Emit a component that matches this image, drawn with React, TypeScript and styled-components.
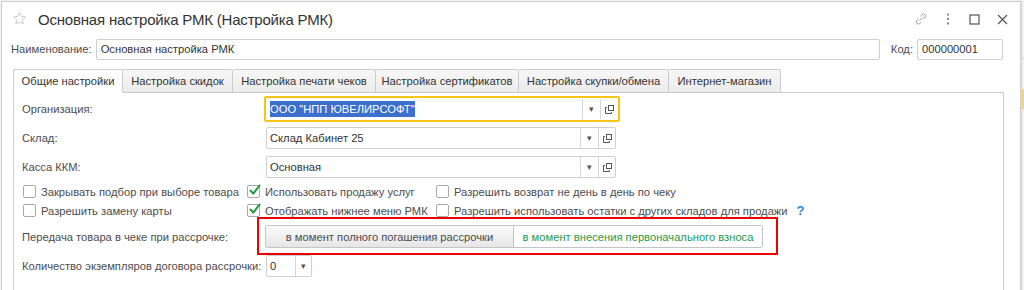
import React from "react";
import styled, { createGlobalStyle } from "styled-components";

/* -----------------------------------------------
 * Форма «Основная настройка РМК»
 * ----------------------------------------------- */

const GlobalStyle = createGlobalStyle`
  html, body {
    margin: 0;
    padding: 0;
    background: #f2f2f2;
    font-family: "Liberation Sans", Arial, sans-serif;
  }
  #root {
    height: 290px;
    overflow: hidden;
  }
`;

const tabs = [
  { label: "Общие настройки", width: 110 },
  { label: "Настройка скидок", width: 110 },
  { label: "Настройка печати чеков", width: 143 },
  { label: "Настройка сертификатов", width: 143 },
  { label: "Настройка скупки/обмена", width: 150 },
  { label: "Интернет-магазин", width: 112 },
];

const checks = [
  { label: "Закрывать подбор при выборе товара", checked: false },
  { label: "Использовать продажу услуг", checked: true },
  { label: "Разрешить возврат не день в день по чеку", checked: false },
  { label: "Разрешить замену карты", checked: false },
  { label: "Отображать нижнее меню РМК", checked: true },
  { label: "Разрешить использовать остатки с других складов для продажи", checked: false, hint: true },
];

const Star = () => (
  <svg width="15" height="15" viewBox="0 0 24 24" fill="none" stroke="#c4c4c4" strokeWidth="1.4" strokeLinejoin="round">
    <path d="M12 2.5l2.9 6.1 6.6.8-4.9 4.6 1.3 6.6L12 17.3l-5.9 3.3 1.3-6.6-4.9-4.6 6.6-.8z" />
  </svg>
);

const LinkIcon = () => (
  <svg width="14" height="14" viewBox="0 0 16 16" fill="none" stroke="#9a9a9a" strokeWidth="1.1" strokeLinecap="round">
    <path d="M6.8 9.2l2.6-2.6" />
    <path d="M7.6 4.6l1.6-1.6a2.4 2.4 0 0 1 3.4 3.4L11 8" />
    <path d="M8.4 11.4l-1.6 1.6a2.4 2.4 0 0 1-3.4-3.4L5 8" />
  </svg>
);

const DotsIcon = () => (
  <svg width="4" height="12" viewBox="0 0 4 12" fill="#8a8a8a">
    <rect x="1" y="0.5" width="2" height="2" />
    <rect x="1" y="5" width="2" height="2" />
    <rect x="1" y="9.5" width="2" height="2" />
  </svg>
);

const SquareIcon = () => (
  <svg width="11" height="11" viewBox="0 0 11 11" fill="none" stroke="#555" strokeWidth="1.2">
    <rect x="1" y="1" width="9" height="9" />
  </svg>
);

const CloseIcon = () => (
  <svg width="11" height="11" viewBox="0 0 11 11" fill="none" stroke="#555" strokeWidth="1.2">
    <path d="M1 1l9 9M10 1l-9 9" />
  </svg>
);

const OpenIcon = () => (
  <svg width="9" height="9" viewBox="0 0 9 9" fill="none" stroke="#555" strokeWidth="1">
    <rect x="3.5" y="0.5" width="5" height="5" />
    <path d="M2 2.5H0.5v6h6V7" />
  </svg>
);

const CheckMark = () => (
  <svg width="13" height="13" viewBox="0 0 13 13" fill="none" stroke="#1f9a3b" strokeWidth="2" strokeLinecap="round" strokeLinejoin="round">
    <path d="M2.5 6.5l2.8 3.2L11.5 1.5" />
  </svg>
);

const ComboBox: React.FC<{ value: string; focused?: boolean; selected?: boolean }> = ({ value, focused, selected }) => (
  <Combo $focused={focused}>
    <ComboText>{selected ? <Selection>{value}</Selection> : value}</ComboText>
    <DropButton>▾</DropButton>
    <OpenButton>
      <OpenIcon />
    </OpenButton>
  </Combo>
);

const App: React.FC = () => {
  return (
    <>
      <GlobalStyle />
      <Desk>
        <Window>
          <TitleBar>
            <Star />
            <Title>Основная настройка РМК (Настройка РМК)</Title>
            <TitleTools>
              <LinkIcon />
              <DotsIcon />
              <SquareIcon />
              <CloseIcon />
            </TitleTools>
          </TitleBar>

          {/* Наименование / Код */}
          <NameRow>
            <Label>Наименование:</Label>
            <TextBox $grow>Основная настройка РМК</TextBox>
            <Label>Код:</Label>
            <TextBox $width={86}>000000001</TextBox>
          </NameRow>

          {/* Вкладки */}
          <TabBar>
            {tabs.map((t, i) => (
              <Tab key={t.label} $active={i === 0} $width={t.width}>
                {t.label}
              </Tab>
            ))}
          </TabBar>

          <Panel>
            <FieldRow>
              <FieldLabel>Организация:</FieldLabel>
              <ComboBox value={'ООО "НПП ЮВЕЛИРСОФТ"'} focused selected />
            </FieldRow>
            <FieldRow>
              <FieldLabel>Склад:</FieldLabel>
              <ComboBox value="Склад Кабинет 25" />
            </FieldRow>
            <FieldRow>
              <FieldLabel>Касса ККМ:</FieldLabel>
              <ComboBox value="Основная" />
            </FieldRow>

            <CheckGrid>
              {checks.map((c) => (
                <CheckItem key={c.label}>
                  <Box>{c.checked && <CheckMark />}</Box>
                  <span>{c.label}</span>
                  {c.hint && <Hint>?</Hint>}
                </CheckItem>
              ))}
            </CheckGrid>

            <FieldRow $top={8}>
              <FieldLabel>Передача товара в чеке при рассрочке:</FieldLabel>
              <Highlight>
                <Switcher>
                  <SwitchButton>в момент полного погашения рассрочки</SwitchButton>
                  <SwitchButton $active>в момент внесения первоначального взноса</SwitchButton>
                </Switcher>
              </Highlight>
            </FieldRow>

            <FieldRow>
              <FieldLabel>Количество экземпляров договора рассрочки:</FieldLabel>
              <SmallCombo>
                <ComboText>0</ComboText>
                <DropButton>▾</DropButton>
              </SmallCombo>
            </FieldRow>
          </Panel>
        </Window>

        <SideStrip>
          <SideBand />
        </SideStrip>
      </Desk>
    </>
  );
};

const Desk = styled.div`
  display: flex;
  height: 290px;
  padding: 1px 0 0 1px;
  box-sizing: border-box;
`;

const Window = styled.div`
  width: 1020px;
  flex: none;
  background: #fff;
  border: 1px solid #cdcdcd;
  border-bottom: none;
  box-sizing: border-box;
  color: #4a4a4a;
  font-size: 11.2px;
`;

const TitleBar = styled.div`
  display: flex;
  align-items: center;
  height: 34px;
  padding: 0 12px 0 10px;
  svg:first-child {
    margin-top: -1px;
  }
`;

const Title = styled.div`
  margin-left: 11px;
  font-size: 15px;
  letter-spacing: -0.2px;
  color: #333;
`;

const TitleTools = styled.div`
  margin-left: auto;
  display: flex;
  align-items: center;
  gap: 17px;
  svg:first-child {
    margin-right: 1px;
  }
  svg:nth-child(2) {
    margin-right: 2px;
  }
`;

const NameRow = styled.div`
  display: flex;
  align-items: center;
  gap: 4px;
  height: 24px;
  padding: 0 17px 0 9px;
  margin-top: 1px;
  > span:nth-of-type(2) {
    margin-left: 7px;
  }
`;

const Label = styled.span`
  color: #4d4d4d;
  white-space: nowrap;
`;

const TextBox = styled.div<{ $grow?: boolean; $width?: number }>`
  ${(p) => (p.$grow ? "flex: 1;" : `width: ${p.$width}px;`)}
  height: 21px;
  box-sizing: border-box;
  border: 1px solid #cfcfcf;
  border-radius: 2px;
  padding: 0 4px;
  line-height: 19px;
  color: #333;
`;

const TabBar = styled.div`
  display: flex;
  margin: 8px 0 0 11px;
  height: 23px;
  position: relative;
  z-index: 1;
`;

const Tab = styled.div<{ $active?: boolean; $width: number }>`
  width: ${(p) => p.$width}px;
  box-sizing: border-box;
  height: 24px;
  border: 1px solid #cbcbcb;
  border-left-width: ${(p) => (p.$active ? "1px" : "0")};
  border-bottom-color: ${(p) => (p.$active ? "#fff" : "#cbcbcb")};
  border-radius: 2px 2px 0 0;
  background: ${(p) => (p.$active ? "#fff" : "linear-gradient(#f7f7f7, #ececec)")};
  color: #333;
  display: flex;
  align-items: center;
  justify-content: center;
  white-space: nowrap;
`;

const Panel = styled.div`
  margin: 0 16px 0 11px;
  border: 1px solid #cbcbcb;
  border-bottom: none;
  padding: 5px 0 0 8px;
  height: 200px;
`;

const FieldRow = styled.div<{ $top?: number }>`
  display: flex;
  align-items: center;
  margin-top: ${(p) => p.$top ?? 0}px;
  margin-bottom: 7px;
`;

const FieldLabel = styled.div`
  width: 244px;
  flex: none;
  color: #4d4d4d;
  white-space: nowrap;
`;

const Combo = styled.div<{ $focused?: boolean }>`
  display: flex;
  width: ${(p) => (p.$focused ? 356 : 350)}px;
  height: ${(p) => (p.$focused ? 26 : 22)}px;
  margin: ${(p) => (p.$focused ? "-2px 0 -2px -2px" : "0")};
  box-sizing: border-box;
  border: ${(p) => (p.$focused ? "2px solid #f5c518" : "1px solid #cfcfcf")};
  border-radius: 2px;
  padding: ${(p) => (p.$focused ? "1px" : "0")};
  background: #fff;
`;

const ComboText = styled.div`
  flex: 1;
  padding: 0 3px;
  display: flex;
  align-items: center;
  color: #333;
  white-space: nowrap;
  overflow: hidden;
`;

const Selection = styled.span`
  background: #3d6fcd;
  color: #fff;
  line-height: 16px;
`;

const DropButton = styled.div`
  width: 17px;
  flex: none;
  border-left: 1px solid #d6d6d6;
  display: flex;
  align-items: center;
  justify-content: center;
  font-size: 9px;
  color: #555;
`;

const OpenButton = styled.div`
  width: 16px;
  flex: none;
  border-left: 1px solid #d6d6d6;
  display: flex;
  align-items: center;
  justify-content: center;
`;

const SmallCombo = styled.div`
  display: flex;
  width: 46px;
  height: 22px;
  box-sizing: border-box;
  border: 1px solid #cfcfcf;
  border-radius: 2px;
  ${DropButton} {
    width: 15px;
  }
`;

const CheckGrid = styled.div`
  display: grid;
  grid-template-columns: 224px 189px auto;
  row-gap: 6px;
  margin-top: 5px;
  margin-left: 1px;
`;

const CheckItem = styled.div`
  display: flex;
  align-items: center;
  gap: 5px;
  height: 13px;
  white-space: nowrap;
  color: #4d4d4d;
`;

const Box = styled.div`
  width: 13px;
  height: 13px;
  box-sizing: border-box;
  border: 1px solid #a9a9a9;
  border-radius: 2px;
  flex: none;
  position: relative;
  svg {
    position: absolute;
    left: 0;
    top: -2px;
  }
`;

const Hint = styled.span`
  margin-left: 4px;
  color: #2f86d4;
  font-weight: bold;
  font-size: 13px;
`;

const Highlight = styled.div`
  margin: -8px 0 -7px -9px;
  padding: 6px 13px 5px 6px;
  border: 2px solid #ee0000;
`;

const Switcher = styled.div`
  display: flex;
  height: 23px;
  box-sizing: border-box;
  border: 1px solid #c4c4c4;
  border-radius: 2px;
`;

const SwitchButton = styled.div<{ $active?: boolean }>`
  display: flex;
  align-items: center;
  justify-content: center;
  width: ${(p) => (p.$active ? 249 : 247)}px;
  box-sizing: border-box;
  background: ${(p) => (p.$active ? "#fff" : "linear-gradient(#fafafa, #e6e6e6)")};
  color: ${(p) => (p.$active ? "#1f9a4c" : "#4d4d4d")};
  border-left: ${(p) => (p.$active ? "1px solid #c4c4c4" : "none")};
  white-space: nowrap;
`;

const SideStrip = styled.div`
  flex: 1;
  background: #f0f0f0;
  display: flex;
  flex-direction: column;
  padding-top: 57px;
  border-left: 1px solid #dcdcdc;
`;

const SideBand = styled.div`
  border-top: 1px solid #d0d0d0;
  height: 30px;
  border-bottom: 20px solid #f2d37a;
`;

export default App;
